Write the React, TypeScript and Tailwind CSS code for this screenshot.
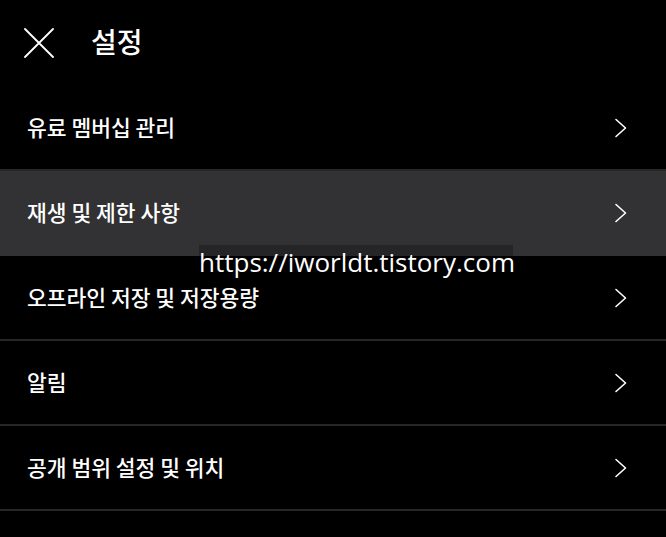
import React from 'react';

const items = [
  '유료 멤버십 관리',
  '재생 및 제한 사항',
  '오프라인 저장 및 저장용량',
  '알림',
  '공개 범위 설정 및 위치',
];

const Chevron = () => (
  <svg width="14" height="20" viewBox="0 0 14 20" fill="none" className="text-white">
    <path d="M2 1.5 L11.5 10 L2 18.5" stroke="currentColor" strokeWidth="1.6" strokeLinecap="round" strokeLinejoin="round" />
  </svg>
);

export default function App() {
  const active = 1;
  return (
    <div
      className="relative w-[666px] h-[537px] overflow-hidden bg-black text-white"
      style={{ fontFamily: '"Noto Sans CJK KR", "Noto Sans", sans-serif' }}
    >
      {/* header */}
      <div className="h-[86px] flex items-center pl-[24px]">
        <svg width="30" height="30" viewBox="0 0 30 30" className="shrink-0">
          <path d="M1 1 L29 29 M29 1 L1 29" stroke="white" strokeWidth="1.8" strokeLinecap="round" />
        </svg>
        <h1 className="ml-[37px] text-[28px] font-medium leading-none -mt-[5px]">설정</h1>
      </div>

      {/* list */}
      <div className="flex flex-col">
        {items.map((label, i) => (
          <div
            key={label}
            className={`h-[85px] flex items-center justify-between pl-[27px] pr-[38px] border-b-2 ${
              i === active ? 'bg-[#323234] border-[#323234]' : 'border-[#262626]'
            }`}
          >
            <span className="text-[21.5px] font-medium">{label}</span>
            <Chevron />
          </div>
        ))}
      </div>

      {/* watermark */}
      <div className="absolute left-[199px] top-[245px] w-[314px] h-[36px] bg-black/25">
        <span
          className="block text-[26px] leading-none text-white whitespace-nowrap pt-[4px]"
          style={{ fontFamily: '"Open Sans", "Noto Sans", sans-serif' }}
        >
          https://iworldt.tistory.com
        </span>
      </div>
    </div>
  );
}
